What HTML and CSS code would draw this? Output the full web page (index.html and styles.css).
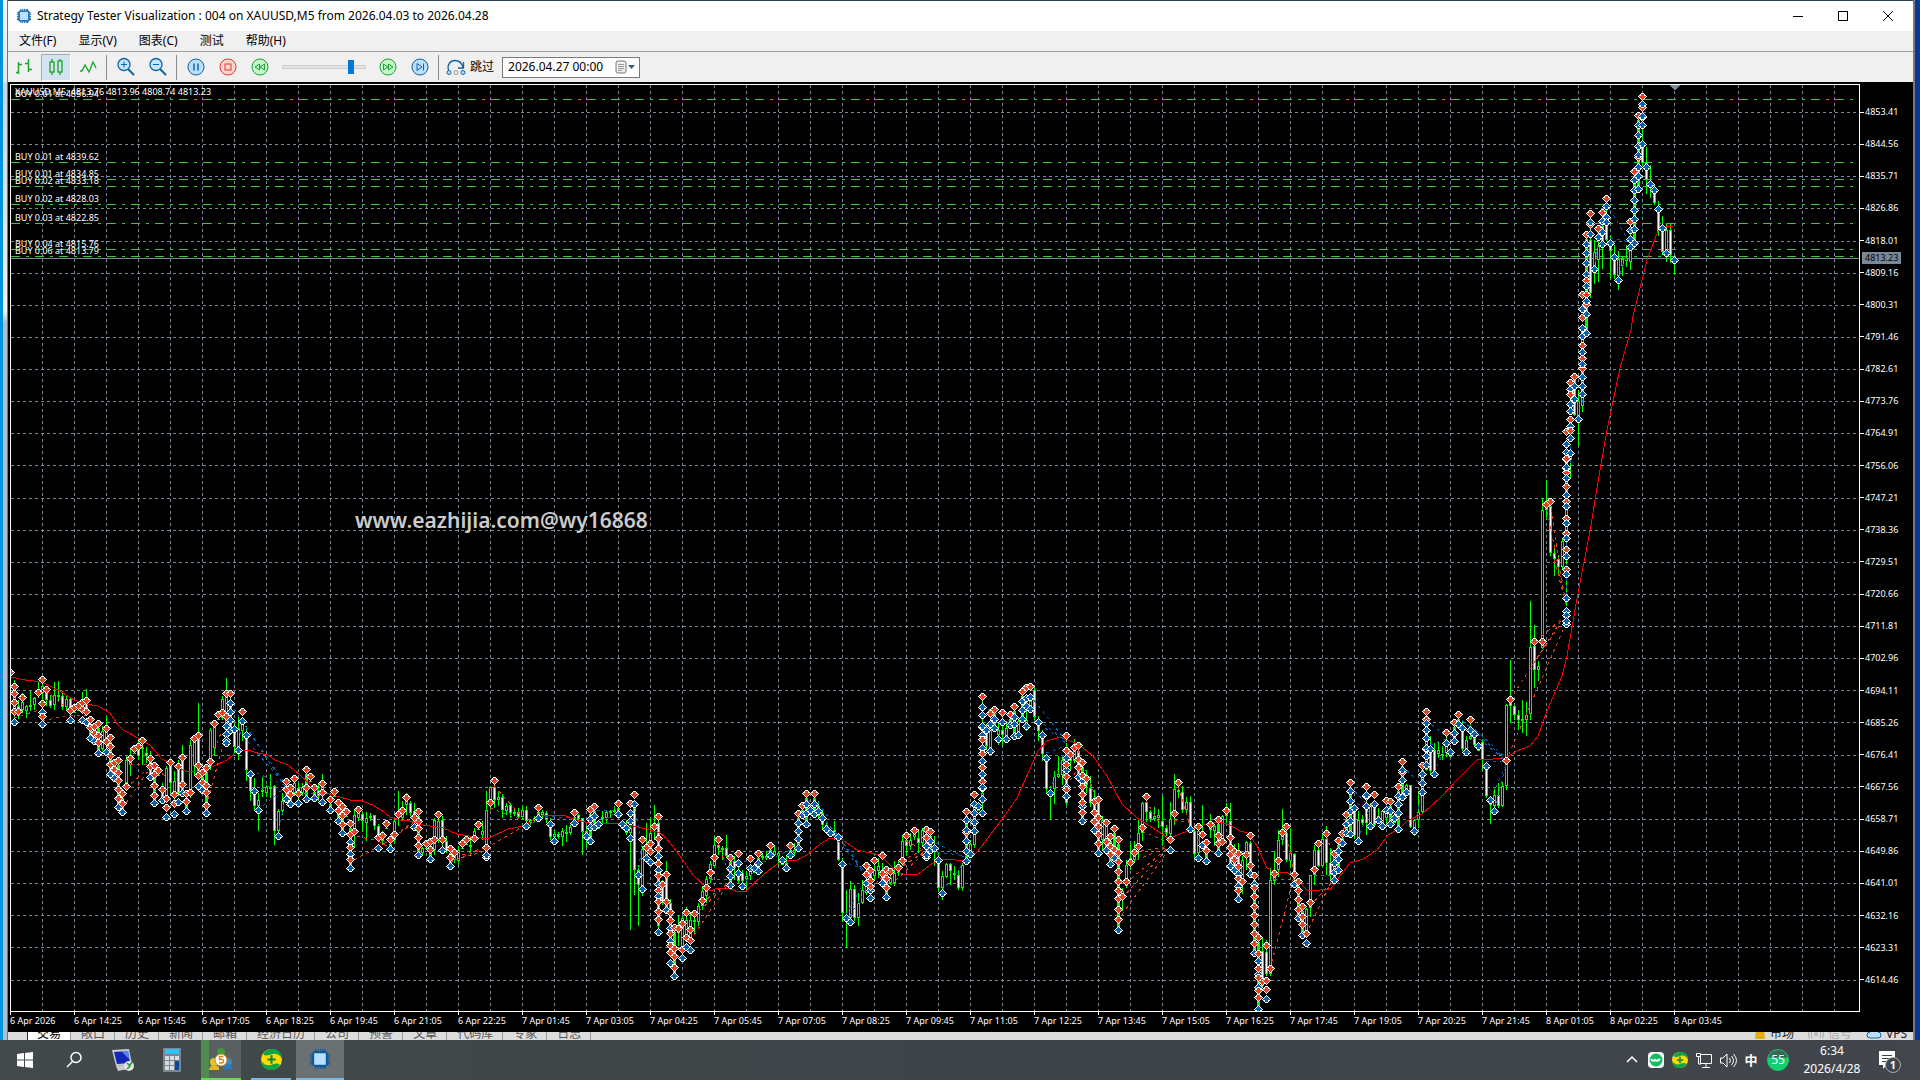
FILE: index.html
```html
<!DOCTYPE html>
<html lang="zh-CN">
<head>
<meta charset="utf-8">
<title>Strategy Tester Visualization : 004 on XAUUSD,M5</title>
<link rel="stylesheet" href="styles.css">
</head>
<body>
<svg class="defs" aria-hidden="true">
  <symbol id="chip" viewBox="0 0 18 18">
    <path d="M5.5 1v16M7.5 1v16M9.5 1v16M11.500 1v16M13 1v16M1 5.500h16M1 7.500h16M1 9.500h16M1 11.500h16M1 13h16" stroke="#0a5a9c" stroke-width="1"/>
    <rect x="3.500" y="3.500" width="11" height="11" rx="1" fill="#b9e0ff" stroke="#0a5a9c" stroke-width="1.500"/>
  </symbol>
  <symbol id="shield" viewBox="0 0 22 22">
    <circle cx="11" cy="11" r="10" fill="#ffd900"/>
    <path d="M3 6C5 1 13-1 18 3c2 2 3 4 3 7C18 5 14 5 11 6 8 7 5 8 3 6zM19 16C17 21 9 23 4 19c-2-2-3-4-3-7 3 5 7 5 10 4 3-1 6-2 8 0z" fill="#0da44a"/>
    <path d="M11 7v8M7 11h8" stroke="#078a3a" stroke-width="2"/>
  </symbol>
</svg>
<main class="desktop">
  <div class="edge-left"></div>
  <section class="window">
    <header class="titlebar">
      <svg class="app-icon" width="16" height="16"><use href="#chip"/></svg>
      <h1>Strategy Tester Visualization : 004 on XAUUSD,M5 from 2026.04.03 to 2026.04.28</h1>
      <div class="caption">
        <button aria-label="Minimize"><svg width="12" height="12"><path d="M1 6.500h10"/></svg></button>
        <button aria-label="Maximize"><svg width="12" height="12"><rect x="1.500" y="1.500" width="9" height="9"/></svg></button>
        <button aria-label="Close"><svg width="12" height="12"><path d="M1 1l10 10M11 1L1 11"/></svg></button>
      </div>
    </header>
    <nav class="menu">
      <button>文件(F)</button><button>显示(V)</button><button>图表(C)</button><button>测试</button><button>帮助(H)</button>
    </nav>
    <div class="toolbar">
      <button aria-label="Bars"><svg width="18" height="18" stroke="#18a62c" fill="none"><path d="M1 14.500h3M3.500 4v12M3.500 6.500H7M10 5.500h3.500M13.500 1v13M13.500 11.500H17" stroke-width="1.500"/></svg></button>
      <button class="on" aria-label="Candles"><svg width="18" height="18" stroke="#18a62c" fill="none" stroke-width="1.300"><path d="M5 1v3M5 14v3M13 1v2M13 14v3"/><rect x="3" y="4" width="4" height="10"/><rect x="11" y="3" width="4" height="11"/></svg></button>
      <button aria-label="Line"><svg width="18" height="18" stroke="#18a62c" fill="none" stroke-width="1.300"><path d="M1 13h2l3-6 4 7 4-10 3 6"/></svg></button>
      <i class="sep"></i>
      <button aria-label="Zoom in"><svg width="20" height="20" stroke="#1464a0" fill="none"><path d="M12 12l6 6" stroke-width="2"/><circle cx="8" cy="7.500" r="6" fill="#c4e5ff" stroke-width="1.300"/><path d="M5 7.500h6M8 4.500v6"/></svg></button>
      <button aria-label="Zoom out"><svg width="20" height="20" stroke="#1464a0" fill="none"><path d="M12 12l6 6" stroke-width="2"/><circle cx="8" cy="7.500" r="6" fill="#c4e5ff" stroke-width="1.300"/><path d="M5 7.500h6"/></svg></button>
      <i class="sep"></i>
      <button aria-label="Pause"><svg width="18" height="18" stroke="#1464a0" fill="#b9e0ff"><circle cx="9" cy="9" r="8"/><path d="M7 5.500v7M11 5.500v7" stroke-width="1.500"/></svg></button>
      <button aria-label="Stop"><svg width="18" height="18" stroke="#e0392c" fill="#ffd5cf"><circle cx="9" cy="9" r="8"/><rect x="6" y="6" width="6" height="6"/></svg></button>
      <button aria-label="Slower"><svg width="18" height="18" stroke="#18a62c" fill="#c8f5cc"><circle cx="9" cy="9" r="8"/><path d="M8.500 6v6L4 9zM13.500 6v6L9 9z"/></svg></button>
      <input class="speed" type="range" min="0" max="100" value="86" aria-label="Speed">
      <button aria-label="Faster"><svg width="18" height="18" stroke="#18a62c" fill="#c8f5cc"><circle cx="9" cy="9" r="8"/><path d="M9.500 6v6L14 9zM4.500 6v6L9 9z"/></svg></button>
      <button aria-label="Step"><svg width="18" height="18" stroke="#1464a0" fill="#b9e0ff"><circle cx="9" cy="9" r="8"/><path d="M6 5.500v7L11 9zM12.500 5.500v7"/></svg></button>
      <i class="sep"></i>
      <label class="skip" for="skip-date"><svg width="20" height="18" stroke="#1464a0" fill="none"><path d="M2.500 12C1 7 4 2.500 9 2.500c4 0 7 3 8 7M17.500 4v6H12" stroke-width="1.300"/><circle cx="3" cy="14.500" r="2" fill="#b9e0ff"/><circle cx="10" cy="14.500" r="2" stroke="#999"/><circle cx="17" cy="14.500" r="2" fill="#b9e0ff"/></svg>跳过</label>
      <div class="date"><input id="skip-date" type="text" value="2026.04.27 00:00"><svg width="24" height="14"><rect x="1" y="1" width="10" height="12" rx="2" fill="#eee" stroke="#777"/><path d="M3 4.500h6M3 6.500h6M3 8.500h6M3 10.500h4" stroke="#999"/><path d="M13 5h7l-3.500 4z" fill="#3d5a87"/></svg></div>
    </div>
    <div class="chart">
      <div class="plot">
        <svg id="plot" role="img" aria-label="XAUUSD,M5"></svg>
        <p class="ohlc">XAUUSD,M5: 4813.76 4813.96 4808.74 4813.23</p>
        <p class="watermark">www.eazhijia.com@wy16868</p>
      </div>
      <div class="prices" id="prices"><b class="tag">4813.23</b></div>
      <div class="times" id="times"></div>
    </div>
    <footer class="tabs">
      <span class="current">交易</span><span>敞口</span><span>历史</span><span>新闻</span><span>邮箱</span><span>经济日历</span><span>公司</span><span>预警</span><span>文章</span><span>代码库</span><span>专家</span><span>日志</span>
      <div class="services">
        <span class="dark"><svg width="12" height="10"><path d="M1 10L2 1h8l1 9z" fill="#e0ac10"/></svg>市场</span>
        <span><svg width="16" height="12" fill="none" stroke="#aaa"><circle cx="8" cy="6" r="1.500"/><path d="M4 2q-2 4 0 8M12 2q2 4 0 8M1.500 1q-2 5 0 10M14.500 1q2 5 0 10"/></svg>信号</span>
        <span class="dark"><svg width="16" height="12"><path d="M4 10a3 3 0 010-6 4 4 0 018 0 3 3 0 010 6z" fill="#b9e0ff" stroke="#1464a0"/></svg>VPS</span>
      </div>
    </footer>
  </section>
  <div class="edge-right"></div>
</main>
<footer class="taskbar">
  <button aria-label="Start"><svg width="16" height="16" fill="#fff"><path d="M0 2l7-1v6.500H0zM8 1l8-1v7.500H8zM0 8.500h7V15l-7-1zM8 8.500h8V16l-8-1z"/></svg></button>
  <button aria-label="Search"><svg width="18" height="18" fill="none" stroke="#fff" stroke-width="1.500"><circle cx="11" cy="6.500" r="5"/><path d="M7.500 10.500L2 16"/></svg></button>
  <button aria-label="Remote"><svg width="24" height="24"><path d="M5 18l8-1 4 4-10 2z" fill="#ccc"/><path d="M1 2l17-1 3 15-16 2z" fill="#c8ccd4"/><path d="M3 4l14-1 2 12-13 1z" fill="#1226b8"/><path d="M10 3l7 0 2 9z" fill="#5a80e8"/><circle cx="18" cy="18" r="5" fill="#e4e4e4"/><path d="M16 15l3 3-3 3M21 14l-2 3" stroke="#2a9a3a" fill="none" stroke-width="1.500"/></svg></button>
  <button aria-label="Calculator"><svg width="18" height="24"><rect width="18" height="24" rx="1" fill="#7b8790"/><rect x="2" y="1" width="14" height="5" fill="#34c0f0"/><path d="M2 8h4v4H2zM7 8h4v4H7zM12 8h4v4h-4zM2 13h4v4H2zM7 13h4v4H7zM2 18h4v4H2zM7 18h4v4H7z" fill="#d6dde2"/><path d="M12 13h4v9h-4z" fill="#0a4a96"/></svg></button>
  <button class="app mt" aria-label="MetaTrader"><svg width="24" height="24"><circle cx="12" cy="5" r="4" fill="#3f9a3a"/><path d="M6 12q6-8 12 0z" fill="#57ad45"/><circle cx="5" cy="15" r="4" fill="#e8c22c"/><path d="M0 23q2-8 10-3v3z" fill="#e0bb20"/><circle cx="19" cy="15" r="4" fill="#3a86c8"/><path d="M24 22q-2-8-10-3v4z" fill="#2f78b8"/><circle cx="12" cy="13" r="6" fill="#fff" stroke="#c98a1a"/><path d="M14.500 9.500h-4v3q4-1 4 1.500t-4.500 2" fill="none" stroke="#d8861a" stroke-width="1.500"/></svg></button>
  <button class="app" aria-label="360"><svg width="23" height="23"><use href="#shield"/></svg></button>
  <button class="app front" aria-label="Strategy Tester"><svg width="22" height="22"><use href="#chip"/></svg></button>
  <div class="tray">
    <svg width="24" height="24" fill="none" stroke="#fff" stroke-width="1.500"><path d="M7 14l5-5 5 5"/></svg>
    <svg width="24" height="24"><rect x="4" y="4" width="16" height="16" rx="4" fill="#fff"/><circle cx="12" cy="12" r="6.500" fill="#10bd62"/><path d="M7 11q2 3 4 1 2 2 5-1" stroke="#fff" stroke-width="2" fill="none"/></svg>
    <svg width="24" height="24" viewBox="-4 -4 30 30"><use href="#shield" width="22" height="22"/></svg>
    <svg width="24" height="24" fill="none" stroke="#fff"><path d="M8.500 6.500h11v9h-11zM14 16v3M10 19.500h8M4.500 5.500h4v3h-4zM6.500 9v7H9"/></svg>
    <svg width="24" height="24" fill="none" stroke="#fff"><path d="M4.500 10v5H7l4 4V6l-4 4zM13.500 10q2 2.500 0 5M15.500 8q4 4.500 0 9M17.500 6q6 6.500 0 13"/></svg>
    <span class="ime">中</span>
    <span class="score">55</span>
    <time class="clock">6:34<br>2026/4/28</time>
    <span class="notice"><svg width="20" height="18"><path d="M1 0h16v14H9l-4 4v-4H1z" fill="#fff"/><path d="M4 4.500h10M4 7.500h10M4 10.500h6" stroke="#3d4245"/></svg><b>1</b></span>
  </div>
</footer>
<script src="script.js"></script>
</body>
</html>
```
FILE: styles.css
```css
* { box-sizing: border-box; }
body { margin: 0; height: 100vh; display: flex; flex-direction: column; overflow: hidden; background: #000; font: 12px/16px "Noto Sans", "Noto Sans CJK SC", sans-serif; color: #000; }
h1, p { margin: 0; font-weight: 400; }
button { border: 0; padding: 0; background: none; font: inherit; color: inherit; display: flex; align-items: center; justify-content: center; }
svg { flex: none; }
.defs { display: none; }
.desktop { flex: 1; min-height: 0; display: flex; }
.edge-left { width: 8px; border-left: 3px solid #0094dc; border-right: 1px solid #71757c; background: linear-gradient(#f4f4f4 0, #e6e6e6 82px, #c8d4e4 83px, #f0f0f0 30%, #aebdce 31%, #aebdce); }
.edge-right { width: 7px; border-left: 2px solid #77797f; background: #06389a; }
.window { flex: 1; min-width: 0; display: flex; flex-direction: column; border-top: 1px solid #2b4152; }
.titlebar { height: 30px; display: flex; align-items: center; background: #fff; padding: 0 3px 0 8px; gap: 5px; }
.titlebar h1 { flex: 1; font-size: 12px; white-space: nowrap; }
.caption { display: flex; }
.caption button { width: 45px; height: 30px; }
.caption svg { fill: none; stroke: #000; }
.menu { height: 21px; display: flex; align-items: center; gap: 22px; padding-left: 11px; background: #f0f0f0; border-bottom: 1px solid #a0a0a0; }
.toolbar { height: 30px; display: flex; align-items: center; background: #f0f0f0; gap: 2px; padding-left: 1px; }
.toolbar button { width: 30px; height: 27px; }
.toolbar .on { background: #d5e3f1; border: 1px solid #a5a9ad; border-right-color: #fff; border-bottom-color: #fff; }
.sep { width: 1px; height: 25px; background: #8c8c8c; margin: 0 2px 0 1px; }
.speed { appearance: none; width: 84px; height: 16px; margin: 0 5px; background: none; }
.speed::-webkit-slider-runnable-track { height: 4px; background: #e3e3e3; border: 1px solid #d0d0d0; }
.speed::-webkit-slider-thumb { appearance: none; width: 6px; height: 14px; margin-top: -6px; background: #0078d7; }
.skip { display: flex; align-items: center; gap: 4px; margin-left: 3px; }
.date { display: flex; align-items: center; width: 138px; height: 21px; margin-left: 6px; border: 1px solid #7a7a7a; background: #fff; }
.date input { flex: 1; min-width: 0; border: 0; padding: 0 0 0 5px; background: none; font: inherit; outline: 0; }
.chart { flex: 1; min-height: 0; display: grid; grid-template-columns: 1fr 53px; grid-template-rows: 1fr 20px; padding: 2px 0 0 2px; background: #000; color: #fff; font-family: "Noto Sans", sans-serif; font-size: 9px; line-height: 12px; }
.plot { position: relative; min-width: 0; min-height: 0; border: 1px solid #fff; overflow: hidden; }
.plot svg { display: block; width: 100%; height: 100%; }
.plot text { fill: #fff; }
.ohlc { position: absolute; left: 4px; top: 1px; }
.watermark { position: absolute; left: 344px; top: 423px; font-size: 21px; line-height: 24px; font-weight: 600; color: #cbcbcb; }
.prices { position: relative; display: flex; flex-direction: column; justify-content: space-between; padding: 22px 0 26px; }
.prices span { display: flex; align-items: center; gap: 1px; }
.prices span::before { content: ""; width: 4px; height: 1px; background: #fff; }
.tag { position: absolute; left: 2px; top: 168px; width: 39px; height: 12px; padding-left: 3px; background: #778899; color: #000; font-weight: 400; }
.times { display: flex; min-width: 0; overflow: hidden; }
.times span { flex: none; width: 64px; padding-top: 3px; white-space: nowrap; }
.times span::before { content: ""; display: block; width: 1px; height: 3px; margin-top: -3px; background: #fff; }
.tabs { height: 8px; overflow: hidden; display: flex; align-items: flex-end; padding-left: 19px; background: #dcdcdc; color: #555; white-space: nowrap; line-height: 12px; }
.tabs > span { padding: 0 9px; border-right: 1px solid #999; border-left: 1px solid #dcdcdc; }
.tabs .current { background: #fff; color: #000; border-left-color: #333; }
.services { margin-left: auto; display: flex; gap: 14px; padding-right: 6px; color: #aaa; }
.services span { display: flex; align-items: center; gap: 4px; }
.services .dark { color: #222; }
.taskbar { height: 40px; flex: none; display: flex; background: linear-gradient(90deg, #41494a, #3d4448 60%, #42464c); color: #fff; }
.taskbar button { width: 49px; height: 40px; }
.taskbar button.app { width: 40px; margin: 0 5px; border-bottom: 2px solid #76b9ed; }
.taskbar button.mt { background: linear-gradient(90deg, #518a4e 8px, #5a6061 8px); border-bottom-color: #5fe044; }
.taskbar button.front { width: 48px; margin: 0; background: #6b7172; }
.tray { margin-left: auto; display: flex; align-items: center; }
.ime { width: 22px; text-align: center; font-size: 13px; font-weight: 600; }
.score { width: 22px; height: 22px; margin: 0 5px; border-radius: 11px; border: 1px solid #10d070; background: linear-gradient(#3d6458 7px, #10d070 8px); text-align: center; line-height: 20px; }
.clock { width: 76px; text-align: center; line-height: 18px; }
.notice { position: relative; width: 50px; padding-left: 8px; }
.notice svg { display: block; }
.notice b { position: absolute; left: 15px; top: 6px; width: 16px; height: 16px; border: 1px solid #aaa; border-radius: 8px; background: #41464b; font-size: 11px; line-height: 14px; text-align: center; }
```
FILE: script.js
```js
// Pixel origins of the chart blocks; block coordinates are in thirds of a pixel.
const origins = { A: [0, 660], B: [380, 740], C: [820, 670], D: [1200, 690], E: [1400, 460], F: [1500, 60], G: [1540, 330] };

// Moving average, one polyline over the blocks.
const average = {
  A: "33,52 75,60 127,67 175,90 223,120 259,133 295,140 330,160 355,195 370,210 415,235 450,255 487,298 520,315 560,338 600,333 635,322 680,300 715,275 740,270 775,280 805,285 825,300 865,315 900,345 935,378 965,398 1000,407 1050,422 1080,421 1120,435 1138,448",
  B: "0,208 30,232 60,241 90,245 130,257 190,266 230,282 320,297 385,267 430,260 490,227 550,226 590,240 640,252 700,250 760,260 800,268 840,280 860,297 900,350 940,405 980,445 990,455 1015,445 1045,446 1075,457 1098,453 1150,405 1190,373 1215,362 1250,360 1280,347 1318,315",
  C: "0,524 30,506 60,505 110,542 180,557 220,595 250,615 295,613 340,580 375,568 440,575 475,545 550,445 590,385 655,245 680,215 720,202 775,222 820,260 860,320 905,403 950,445 1000,475 1045,505 1060,502 1100,483 1180,457",
  D: "60,397 90,405 120,425 145,430 170,470 200,535 225,546 260,546 290,570 320,600 350,605 370,597 390,600 420,560 450,520 490,507 530,480 565,435 600,415 620,395 665,372 720,325 780,262 830,212 880,207 915,205 950,185 990,168 1015,140",
  E: "440,755 485,650 500,590 535,400 570,215 601,30",
  G: "200,300 240,115 273,0",
  F: "400,770 440,600 475,515 490,500 520,500"
};

// Candles: x and type (u hollow, d filled), high, body top, body bottom, low.
const candles = {
  A: "43u 60 90 160 180;55d 120 140 170 178;67u 100 128 150 160;79u 135 140 155 176;91u 93 135 143 155;103u 112 115 137 150;115u 65 90 108 115;127u 60 80 100 145;139d 85 98 120 140;151d 105 122 140 145;163u 68 107 137 150;175d 63 105 110 125;187d 95 108 142 152;199u 110 118 143 155;211d 115 118 150 160;247u 97 120 150 155;259d 87 130 160 170;307u 200 215 268 275;319u 170 205 245 260;379u 290 300 370 390;391u 265 285 315 350;415d 235 262 290 300;427u 245 262 268 315;439d 262 280 288 310;451d 275 300 350 355;487d 370 395 420 425;499u 320 325 415 425;511d 315 318 370 400;523u 335 365 405 420;535d 300 330 400 410;547d 256 300 390 400;571u 240 255 400 415;583u 225 240 320 345;595d 129 230 350 360;631u 205 210 320 330;643u 180 200 265 290;667u 110 117 175 180;679u 54 100 200 210;691d 105 125 215 220;703d 190 212 262 280;715u 170 205 262 302;727u 175 180 215 245;739d 200 225 332 365;751d 333 345 395 425;763d 355 395 440 450;775u 400 420 440 515;787u 352 390 398 412;799u 375 383 400 412;811u 343 382 388 415;823d 375 380 515 555;835u 448 455 515 520;847u 400 425 455 467;883u 350 370 400 410;895d 370 385 410 420;907u 370 383 400 410;955d 370 390 410 425;967u 342 370 400 420;1063u 450 465 520 565;1075u 445 458 475 485;1087d 458 462 485 517;1099u 457 475 490 545;1111u 460 470 476 485;1123d 465 467 500 510;1135d 492 500 530 545;1147d 515 530 545 555;1183u 475 483 540 550;1195u 393 460 475 500;1207u 425 445 475 480;1219u 400 425 435 465;1231d 425 430 460 470;1243d 430 455 480 490",
  B: "127u 322 325 340 350;163u 235 240 330 345;175u 232 245 300 310;187d 230 240 305 320;199d 290 305 335 340;223u 335 340 360 370;235u 320 330 365 375;271u 290 315 322 350;283u 265 275 300 310;307u 243 275 287 300;319u 155 210 325 335;331u 138 142 200 210;343d 130 142 182 205;355u 155 172 180 200;367d 163 172 212 235;379u 190 200 213 225;391d 190 197 220 235;403u 205 218 221 230;415d 205 217 232 237;427u 195 210 232 242;439d 200 210 245 255;451u 238 242 250 255;463u 230 235 242 248;487u 212 218 225 235;499d 215 220 240 250;511d 235 245 293 300;523u 270 284 292 300;535d 278 283 293 298;547u 265 275 293 318;559u 255 276 280 308;571u 255 262 280 285;595d 222 226 238 248;607d 235 235 278 345;619u 260 275 300 325;667u 215 232 237 250;679u 212 216 235 250;691u 212 215 220 235;703u 200 210 216 220;739d 240 255 280 285;751u 215 265 280 570;763d 190 205 392 465;775d 375 390 437 560;787u 320 328 440 470;799u 250 320 345 350;811u 235 280 325 340;823u 195 255 265 300;835d 235 250 560 570;847d 420 440 487 497;859d 363 400 510 515;871d 478 490 640 650;895d 525 570 580 620;907u 528 535 640 645;919u 503 540 590 600;931u 520 540 600 610;943u 520 540 547 585;955u 490 498 547 560;967u 440 455 500 510;979u 410 418 470 490;991u 365 373 418 430;1003u 288 315 380 385;1015d 298 317 325 345;1027u 320 324 327 362;1039d 285 325 350 355;1063d 350 365 385 420;1075d 375 390 425 430;1087d 390 400 425 440;1099u 395 410 418 450;1111u 375 390 410 420;1147u 340 348 355 362;1159u 335 350 355 362;1183u 320 335 345 350;1195u 335 340 350 378;1219u 345 370 380 385;1243u 310 330 340 350;1315u 185 200 230 235",
  C: "7d 415 430 467 480;19d 455 465 480 490;31u 480 485 495 500;43d 453 480 498 510;55d 490 505 570 573;67d 565 585 730 757;79u 660 740 745 835;91u 633 658 745 755;103d 645 657 745 755;115u 670 700 745 768;127u 630 660 700 702;139u 600 645 670 675;151d 600 605 665 670;163u 580 600 620 630;175u 565 590 605 625;187d 580 600 640 645;211u 620 625 640 645;223u 575 610 640 650;235u 575 590 610 620;247u 495 515 583 590;259d 490 510 530 560;271u 490 512 530 540;283u 472 480 503 512;295d 478 505 520 550;307u 475 480 520 530;343d 500 525 545 590;355d 550 575 655 665;367u 605 620 655 690;379u 580 583 622 625;391d 580 583 605 645;403u 590 610 616 630;415d 600 615 655 662;427u 580 585 655 665;451u 510 523 550 555;463u 390 400 525 535;487u 90 370 400 430;499d 165 190 230 240;511u 150 165 240 245;535u 160 180 195 225;547d 145 180 195 225;559u 155 175 200 205;595u 150 155 195 200;619u 125 150 170 185;631u 90 95 125 130;643d 55 62 143 155;655d 140 160 185 215;667d 180 200 253 275;679d 255 270 358 370;691d 350 360 370 450;703u 305 322 358 402;715u 258 313 322 324;727u 262 270 315 345;739d 220 240 400 405;751d 245 265 275 303;763u 208 240 275 280;775d 230 245 330 335;799d 300 325 345 370;811d 320 355 400 412;823d 360 400 440 450;835d 380 400 540 550;847u 440 450 510 540;859u 450 460 535 545;907u 655 665 690 725;919u 570 585 650 655;931u 520 565 585 600;943u 515 540 570 580;955u 450 490 540 570;967u 397 400 490 513;979d 395 398 428 457;991d 420 428 447 458;1003u 412 440 447 455;1015u 418 437 445 475;1027d 378 455 472 530;1039d 465 475 490 505;1051u 397 448 492 520;1063u 312 358 440 465;1075d 350 360 368 385;1087d 348 367 422 430;1099u 382 397 422 430;1111d 380 397 480 485;1123d 470 485 553 565;1135u 480 485 550 560;1147u 405 485 495 500;1171u 432 460 480 505;1183u 465 470 485 530;1207u 435 440 520 530;1219u 400 430 440 460;1231d 400 455 590 600",
  D: "103d 462 485 545 550;115d 460 490 625 640;127u 500 512 570 612;139u 455 458 505 540;151d 455 460 550 560;187d 745 785 890 895;199d 750 787 853 860;211u 535 570 853 860;223u 485 550 575 587;235u 420 450 540 563;247u 357 435 450 465;259d 400 430 512 517;271u 415 490 515 535;283d 490 492 560 570;319u 655 658 735 740;331u 555 557 655 683;343u 465 480 555 585;355d 455 480 530 532;367u 430 447 530 532;379d 408 447 520 555;391d 475 520 555 570;403u 480 500 570 585;463d 345 365 435 447;475u 365 390 450 455;487d 375 388 400 405;499d 300 348 400 437;511u 340 350 405 410;523d 345 350 405 412;535u 355 378 385 395;547u 360 365 405 410;559u 350 362 385 400;619u 283 287 310 315;631d 285 287 413 415;643u 387 392 425 440;655u 305 367 392 415;667u 235 240 367 370;679u 70 80 240 245;691d 138 180 243 255;703d 160 180 245 250;715u 155 180 192 205;727u 170 193 200 210;739u 140 160 190 202;787d 90 125 178 185;799u 140 150 185 190;811u 90 138 148 150;823d 120 145 165 170;847d 150 157 210 242;859d 215 220 320 325;871d 325 335 345 402;883u 297 315 350 360;895d 280 315 350 355;907u 278 290 350 352;919u 42 47 290 302",
  E: "331d 600 725 740 790;343d 735 740 765 780;355d 750 765 780 812;367u 720 777 783 820;379u 728 767 780 828;391u 423 562 763 780;403d 495 560 632 685;415u 605 618 632 665;427u 114 151 566 568;439d 60 130 150 180;451d 130 140 280 290;463d 255 280 298 350;475d 285 298 323 345;487u 235 243 323 328;499u 0 5 235 440;511u -30 -20 0 55",
  G: "103d 130 145 255 260;115u 180 215 260 350;127u 0 5 230 248",
  F: "271d 500 540 700 715;283u 540 578 625 673;295u 520 560 600 668;307d 460 500 550 627;319d 420 490 540 545;331d 525 550 575 658;343d 555 600 645 658;355u 573 597 650 692;367u 590 597 620 648;379u 555 595 605 622;391u 480 555 608 630;427d 205 255 310 320;439d 262 310 360 402;451d 315 370 385 415;463d 375 400 430 435;475d 425 455 515 530;487d 468 510 578 585;499u 490 510 580 608;511d 490 510 587 610;523d 585 598 600 645"
};

// Deals per bar: r is a sell arrow, b a buy arrow.
const deals = {
  A: "31 r40;43 r83 r103 r131 r158 b187;55 r158;67 r115;115 r100;127 r62 r133 b157 r173 b193;139 r92;211 r155 b181;223 r145;235 r138;247 r130 r152 b181;259 r125 r158 b187;271 r182 r205 b236;283 r202 r222 b245;295 r194 r229 r250 b280;319 r209 r247 b276;331 r236 r262 r290 r317 b343;343 r311 r330 b354;355 r305 r341 r364 r390 r418 b442;367 r404 r432 b458;379 r383;391 r298;403 r269;415 r263;427 r244;451 r298 r322 b351;463 r320 r346 r380 r409 b431;475 r335;487 r392 b420;499 r419 r446 b472;511 r311;523 r407 r434 b462;535 r322 b428;547 r296 r377 b400;559 r404 r428 b454;571 r400;583 r238;595 r230 r320 r350 b380;607 r341 r371 b390;619 r325 r380 r401 r438 b460;631 r307;643 r193;655 r167;667 r160;679 r103 r173 b198 b223 b240 b249;691 r103 b131 b157 b181 b212;703 b208;715 b272;727 r158 b184;739 b226;751 b343;763 b393;775 b451;835 b529;859 r368 r392 b418;871 r386 r407 b433;883 r359;895 r404 b430;919 r331 r385 b418;931 r353;943 r385 b415;967 r373 r400 b427;991 r422 b451;1003 r397;1015 r430 r455 b483;1027 r443 r470 r496 b520;1039 r458;1051 r493 r526 b547 r566 b583 r602 b626;1063 r516;1075 r451;1135 r536 b565;1147 r530;1159 r493;1171 r541 b568;1183 r526;1195 r467;1207 r455;1219 r415;1243 r475 b503;1255 r457 r486 r508 r535 r560 b587",
  B: "139 r314;151 r307 r330 b358;163 r301;175 r227;187 r301 b330;211 r329 r354 b379;223 r341;247 r313;259 r301;283 r299;295 r257;319 b352 r326 b347;331 r190;343 r125;439 b259;475 r206 b235;511 b253;523 b304;583 r221 b249;619 b289;631 r212 b239 b263 b304;643 r203 b229 b262;655 b253;715 r193 b222;727 b254;739 b266;751 r193 b219 b245 b295;763 r167 b192;775 b406;787 r301 b448;799 r324 b355;811 r314 r338 b367;823 r263;835 r233 r298 r328 b350 r372 b390 r409 b432 r453 b468 r486 r517 r540 b577;847 r437;859 r407 b510 r486;871 r520 r545 b565 r583 b603 r619 r641 b670;883 r565 r629 r653 r684 b709;895 r569;907 r553 r632 b656;919 r520 r595 b622;931 r572 r605 b631;943 r524;967 r485;979 r446;991 r401;1003 r355;1015 r301;1051 r355 b384 b408 b435;1075 r344 b370 b401;1087 b439;1111 r359 b384;1123 b386;1135 r343 b370 b394;1171 r320 b345;1207 b361;1219 b385;1231 r320 b345;1255 r223 b249 b273 b298 b325;1267 r200 b227;1279 r164 b192 b221 b252;1291 b210;1303 r164 b192 b222;1315 b213",
  C: "7 b445;19 b477;31 b491;55 b501;67 b582;79 b744;91 b757;139 r590 b641 r616;151 r605 r634 b661 r652 b685;163 r575;187 r560 b640 r614;199 r601 r629 r656 b683;211 r607;235 r596;247 r573;259 r500;283 r485;319 b561 r481 r505 b530 b557;331 r487 b513 b540;343 b535;355 b571;367 b670;439 r427 b451 r489 b481 b515 b545 b574;451 b552;463 r377 b403 b430 b456 b484;475 b410;487 r83 b113 b136 r176 b168 b195 r212 b235 r254 b273 r296 b313 r337 b356 b352 b388 b430;499 b181;511 r133 b163 b244;523 r122 b148 b175;535 b208;547 r131 b157;559 b208;571 r136 b166;583 r113 b142 b163 b199;595 b196;607 r68 b95 b122 b148;619 r56 b85 b110 b170;631 r53 b83 b118;655 b157;667 b196;679 b265;691 b370;739 r200 b265 r245 b300 r287 r323 b352 r362 b380;751 r257;763 r235;775 r230 r272 b323 r296;787 r281 b335 r319 r352 r377 b408 r401 r430 b454;799 r328;823 r398 r430 r458 b482;835 r392 r445 r472 r497 r524 b550;859 r461 b542 r518;871 r503 r532 r557 b582;883 r478 r542 b566;895 r512 r551 r577 r606 r637 r664 r689 r721 r751 b781;907 r683;919 r638;931 r581;943 r551;955 r533;967 r476;979 r382;1051 r512 b541;1063 r434;1075 r341;1111 b478;1135 r473 b565;1147 b527 r497;1159 r521 r544 b574;1171 r467;1195 r452 r498 r523 b550;1207 r518;1219 r425",
  D: "91 r446 r475 r497 b529;103 r488 r512 b541;115 r493 b553 r532 b588 r569 r605 b628;127 r577;139 r496;151 r440 b553 r530;163 r560 b582 r594 r623 r653 r680 r707 r734 b790 r764;175 r745 r794 b813 b853 r839 b892 r866 r905 r926 b958;187 r878;199 r770 r875 r900 b928;211 r839;223 r553;235 r515;247 r431;259 r413;283 b584 r557;295 r578 r605 r632 b686 r660;307 b737 r653 r683 r707;319 r734 b761;331 r641;343 r542;355 r464;379 r433;403 r494 b520 b548 b571;415 r454 b484 b508 b541;427 r433 b460;439 r377 b403 b430;451 r280 b304 b334 b365 b393 b433;463 b356;475 b454;499 r293 r322 b316 b349;511 b409;523 r317 b343;535 b390;547 b409;559 r335 b362;571 r338 b364 b403;583 b385;595 r293 b318 b344 b370 b418;607 r217 r250 b241 b272 b323;619 b307;643 b424;667 r230 b253 b280 b308;679 r68 r90 b99 b121 b146 b177 b174 b199 b227;691 b178;703 b253;739 r131 b159;751 b186;763 r100 b130 b154;775 r76 b102;787 b115;799 b187;811 r92 b121;823 b132;835 b169;859 b229;871 b332;883 b364;919 r215;931 r32",
  E: "403 r548;427 r547;439 r136;451 r128;499 r0 b25 r41 b55 r83 b106 r127 b139 r178 b190 r223 b235 r271 b289 r331 b343 b415 b455 b465 b493 b483",
  G: "79 r308 b344 b367 r388 b412;91 r160 b179 r196 b223 b244 r271 b288 r305 b325 b370;103 r143 b168 b209;115 b268;127 r50 b67 r88 r117 b103 b142 b169 b193",
  F: "247 r706 b747 r775 b804 b829;259 r526 b553 b580 b609 b643 r664 b679 r706 r735 b724 b763 b820;271 r463 r497 b487 b524;283 b627;295 r508 b532;307 r461 b485 b517 b553;319 r418 b440 b471 b488;331 b550;343 b592;355 b661;391 r486 b511 b538 b563;403 r338 b361 b392 b420 b451 b479 b508 b550;415 r170 b196 b227 b260 r296 b286 b322 b349 b388;427 r112 r145 b133 r175 b170 b196 b253;439 b322;451 b373;463 b391;475 b448;487 b504;499 b580;523 b601"
};

// Dashed links between the entry and the exit of a deal.
const links = {
  A: "r 43 175 127 148;r 127 185 211 165;r 139 95 211 155;r 211 168 259 165;r 379 385 451 322;r 391 315 451 314;r 379 430 451 325;r 451 322 499 350;r 619 438 679 225;r 631 310 667 210;b 691 131 859 385;b 691 185 859 378;b 727 184 859 375;b 751 330 859 380;b 763 393 811 380;b 775 451 847 392;b 835 529 855 400;r 871 400 1003 402;r 1051 526 1171 550;r 1063 602 1135 562;r 1147 555 1255 480",
  B: "r 31 300 103 245;r 0 305 31 325;r 211 366 319 326;r 223 360 319 333;r 247 345 319 322;r 331 205 427 240;r 343 138 439 245;r 319 326 427 262;b 439 259 511 228;b 475 230 583 235;b 523 304 583 243;b 631 212 715 210;b 643 258 727 208;b 763 192 787 320;b 775 406 787 310;r 931 605 1051 425;r 943 530 1051 425;r 967 490 1051 425;r 991 417 1051 420;r 1015 310 1051 410;b 1051 365 1135 365;b 1087 439 1171 340;b 1111 384 1231 330;b 1267 200 1303 175;b 1303 170 1348 240",
  C: "b 0 420 139 610;b 19 455 139 615;b 31 480 139 620;b 67 575 139 600;b 91 740 151 640;b 79 735 139 625;r 151 655 247 573;r 199 660 319 545;r 211 607 319 548;r 235 600 319 540;r 247 573 319 535;r 259 515 319 545;b 331 510 439 565;b 331 545 439 560;b 367 665 439 570;b 631 75 739 215;b 643 150 739 220;b 655 150 739 215;b 679 250 739 230;b 691 365 739 230;b 487 110 583 160;r 739 350 787 280;r 775 240 835 400;r 895 750 1051 535;r 907 685 1051 530;r 919 640 1051 528;r 931 581 1051 530;r 943 547 1051 528;r 967 485 1051 520;r 979 395 1051 510;r 1063 450 1111 460;r 1075 350 1111 465",
  D: "r 211 839 283 560;r 223 568 283 568;r 259 420 283 550;r 319 734 403 560;r 331 650 403 570;r 343 556 403 556;r 379 440 403 500;b 451 290 499 340;b 451 340 499 345;b 475 450 511 350;b 559 345 595 375;b 607 225 655 278;b 643 420 667 300;b 679 90 739 140;b 691 165 763 140;b 703 250 739 170;b 775 95 919 215;b 787 90 919 212;b 811 105 919 205;b 859 215 919 218;b 871 330 919 225;b 883 364 919 225;r 403 500 439 400",
  E: "r 319 905 499 490;r 331 720 499 460;r 403 610 499 470;r 427 530 499 465;r 439 136 499 440;r 451 128 499 440;r 463 300 499 430;b 499 20 499 440",
  F: "b 319 430 391 550;b 331 535 391 548;b 355 660 391 560;b 283 627 307 470;b 271 500 307 530",
  G: "b 91 160 91 400;b 127 0 127 230"
};

const levels = [[99, "BUY 0.01 at 4856.94"], [162, "BUY 0.01 at 4839.62"], [179, "BUY 0.01 at 4834.85"], [186, "BUY 0.02 at 4833.18"], [204, "BUY 0.02 at 4828.03"], [223, "BUY 0.03 at 4822.85"], [249, "BUY 0.04 at 4815.76"], [256, "BUY 0.06 at 4813.79"]];

const plot = document.getElementById("plot");
const width = plot.clientWidth + 11, height = plot.clientHeight + 85;
const px = (block, x) => 10 + 4 * Math.round((origins[block][0] + x / 3 - 10.3) / 4);
const py = (block, y) => Math.round(origins[block][1] + y / 3 - 0.3);
const line = (x1, y1, x2, y2, cls) => `<path d="M${x1} ${y1}L${x2} ${y2}" ${cls}/>`;
const entries = (table) => Object.entries(table).flatMap(([block, text]) => text.split(";").map((item) => [block, item]));

// An arrow is its coloured shape over four white copies shifted by one pixel.
const arrow = (id, x, y, steps, fill) => {
  const halo = [[-1, 0], [1, 0], [0, -1], [0, 1]].map(([dx, dy]) => `M${x + dx} ${y + dy}${steps}`).join("");
  return `<g id="${id}"><path d="${halo}" fill="#fff"/><path d="M${x} ${y}${steps}" fill="${fill}"/></g>`;
};
let out = "<defs>"
  + arrow("r", -1, -3, "h3v2h2v1h-1v1h-1v1h-1v1h-1v-1h-1v-1h-1v-1h-1v-1h2z", "#e2431e")
  + arrow("b", 0, -3, "h1v1h1v1h1v1h1v1h-2v2h-3v-2h-2v-1h1v-1h1v-1h1z", "#0560b0")
  + '</defs><g transform="translate(-11 -85)" fill="none" shape-rendering="crispEdges">';
for (let x = 42; x < width; x += 32) out += line(x + 0.5, 85, x + 0.5, height, 'stroke="#778899" stroke-dasharray="3 3"');
for (let k = 0; k < 28; k++) {
  const y = Math.round(112 + k * 32.13) + 0.5;
  out += line(11, y, width, y, 'stroke="#778899" stroke-dasharray="3 3"');
}
for (const [y] of levels) out += line(11, y + 0.5, width, y + 0.5, 'stroke="#32cd32" stroke-dasharray="9 6 3 6"');
out += line(11, 258.5, width, 258.5, 'stroke="#778899"');

const drawn = new Set();
for (const [block, item] of entries(candles)) {
  const [head, high, top, bottom, low] = item.split(" ");
  const x = px(block, parseInt(head)), t = py(block, +top);
  drawn.add(x);
  out += `<rect x="${x}" y="${py(block, +high)}" width="1" height="${py(block, +low) - py(block, +high)}" fill="#0f0"/>`;
  const h = Math.max(2, py(block, +bottom) - t);
  out += `<rect x="${x - 1}" y="${t}" width="3" height="${h}" fill="#0f0"/>`;
  if (h > 2) out += `<rect x="${x}" y="${t + 1}" width="1" height="${h - 2}" fill="${head.endsWith("u") ? "#000" : "#fff"}"/>`;
}
for (const [block, item] of entries(deals)) {
  const parts = item.split(" "), x = px(block, +parts[0]);
  if (drawn.has(x)) continue;
  const ys = parts.slice(1).map((p) => py(block, +p.slice(1)));
  const a = Math.min(...ys) + 4, b = Math.max(...ys) + 2;
  out += `<rect x="${x - 1}" y="${a}" width="3" height="${Math.max(1, b - a)}" fill="#0f0"/>`;
}
const points = Object.entries(average).flatMap(([block, text]) => text.split(" ").map((p) => {
  const [x, y] = p.split(",").map(Number);
  return [Math.round(origins[block][0] + x / 3), py(block, y)];
})).sort((a, b) => a[0] - b[0]);
out += `<polyline points="${points.join(" ")}" stroke="#f00"/>`;
for (const [block, item] of entries(links)) {
  const [kind, x1, y1, x2, y2] = item.split(" ");
  out += line(px(block, +x1), py(block, +y1), px(block, +x2), py(block, +y2), `stroke="${kind === "r" ? "#e2431e" : "#0560b0"}" stroke-dasharray="3 4"`);
}
for (const [block, item] of entries(deals)) {
  const parts = item.split(" "), x = px(block, +parts[0]);
  for (const p of parts.slice(1)) out += `<use href="#${p[0]}" x="${x}" y="${py(block, +p.slice(1))}"/>`;
}
out += '<path d="M1669 85h11l-5 5z" fill="#778899"/>';
for (const [y, label] of levels) out += `<text x="15" y="${y - 2}">${label}</text>`;
plot.innerHTML = out + "</g>";

const prices = document.getElementById("prices");
for (let k = 0; k < 28; k++) prices.insertAdjacentHTML("beforeend", `<span>${(4853.41 - 8.85 * k).toFixed(2)}</span>`);

const times = "6 Apr 2026,6 Apr 14:25,6 Apr 15:45,6 Apr 17:05,6 Apr 18:25,6 Apr 19:45,6 Apr 21:05,6 Apr 22:25,7 Apr 01:45,7 Apr 03:05,7 Apr 04:25,7 Apr 05:45,7 Apr 07:05,7 Apr 08:25,7 Apr 09:45,7 Apr 11:05,7 Apr 12:25,7 Apr 13:45,7 Apr 15:05,7 Apr 16:25,7 Apr 17:45,7 Apr 19:05,7 Apr 20:25,7 Apr 21:45,8 Apr 01:05,8 Apr 02:25,8 Apr 03:45";
document.getElementById("times").innerHTML = times.split(",").map((t) => `<span>${t}</span>`).join("");
```
